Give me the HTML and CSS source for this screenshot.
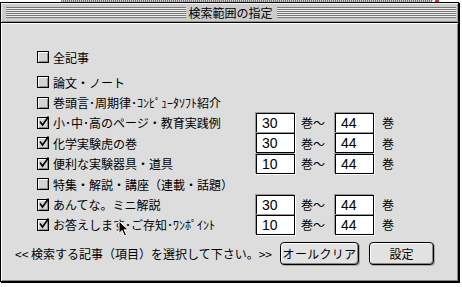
FILE: index.html
```html
<!DOCTYPE html>
<html lang="ja">
<head>
    <meta charset="UTF-8">
    <title>検索範囲の指定</title>
    <link rel="stylesheet" href="styles.css">
</head>
<body>
    <div class="desk"><span class="desk-bar"></span><span class="desk-mark"></span></div>

    <div class="window">
        <div class="titlebar">
            <span class="stripes"></span>
            <span class="title">検索範囲の指定</span>
            <span class="stripes"></span>
        </div>

        <div class="content">
            <div class="row first">
                <span class="cb"></span><span class="label">全記事</span>
            </div>
            <div class="row">
                <span class="cb"></span><span class="label">論文・ノート</span>
            </div>
            <div class="row">
                <span class="cb"></span><span class="label">巻頭言･周期律･ｺﾝﾋﾟｭｰﾀｿﾌﾄ紹介</span>
            </div>
            <div class="row">
                <span class="cb on"><svg viewBox="0 0 12 12"><path d="M2 5.5 L4.5 9 L10.5 0.5"/></svg></span>
                <span class="label">小･中･高のページ・教育実践例</span>
                <span class="field">30</span><span class="unit">巻〜</span><span class="field">44</span><span class="unit end">巻</span>
            </div>
            <div class="row">
                <span class="cb on"><svg viewBox="0 0 12 12"><path d="M2 5.5 L4.5 9 L10.5 0.5"/></svg></span>
                <span class="label">化学実験虎の巻</span>
                <span class="field">30</span><span class="unit">巻〜</span><span class="field">44</span><span class="unit end">巻</span>
            </div>
            <div class="row">
                <span class="cb on"><svg viewBox="0 0 12 12"><path d="M2 5.5 L4.5 9 L10.5 0.5"/></svg></span>
                <span class="label">便利な実験器具・道具</span>
                <span class="field">10</span><span class="unit">巻〜</span><span class="field">44</span><span class="unit end">巻</span>
            </div>
            <div class="row">
                <span class="cb"></span><span class="label">特集・解説・講座（連載・話題）</span>
            </div>
            <div class="row">
                <span class="cb on"><svg viewBox="0 0 12 12"><path d="M2 5.5 L4.5 9 L10.5 0.5"/></svg></span>
                <span class="label">あんてな。ミニ解説</span>
                <span class="field">30</span><span class="unit">巻〜</span><span class="field">44</span><span class="unit end">巻</span>
            </div>
            <div class="row">
                <span class="cb on"><svg viewBox="0 0 12 12"><path d="M2 5.5 L4.5 9 L10.5 0.5"/></svg></span>
                <span class="label">お答えします･ご存知･ﾜﾝﾎﾟｲﾝﾄ</span>
                <span class="field">10</span><span class="unit">巻〜</span><span class="field">44</span><span class="unit end">巻</span>
            </div>

            <div class="footer">
                <span class="hint">&lt;&lt; 検索する記事（項目）を選択して下さい。&gt;&gt;</span>
                <button class="btn clear">オールクリア</button>
                <button class="btn ok">設定</button>
            </div>
        </div>
    </div>

    <!-- mouse pointer over the last row -->
    <svg class="cursor" viewBox="0 0 12 17"><path d="M1 1 L1 13.5 L4 10.5 L6.5 16 L8.5 15 L6.2 9.8 L10.2 9.8 Z"/></svg>
</body>
</html>
```

FILE: styles.css
```css
body {
    margin: 0;
    width: 462px;
    height: 287px;
    overflow: hidden;
    background: #fff;
    font-family: "Noto Sans CJK JP", sans-serif;
    font-size: 12px;
    color: #000;
    position: relative;
}

.desk {
    display: flex;
    height: 2px;
}

.desk-bar {
    margin-left: 61px;
    width: 372px;
    background: repeating-linear-gradient(90deg, #777 0 1px, #ccc 1px 2px);
}

.desk-mark {
    margin-left: 2px;
    width: 4px;
    background: #d33;
}

.window {
    box-sizing: border-box;
    width: 459px;
    height: 280px;
    border: 1px solid #000;
    box-shadow: 1px 1px 0 #000;
    background: #dddddd;
    display: flex;
    flex-direction: column;
}

.titlebar {
    display: flex;
    align-items: center;
    height: 19px;
    padding: 0 2px 0 5px;
    background: #cccccc;
    border-bottom: 1px solid #000;
    box-shadow: inset 1px 1px 0 #f4f4f4, inset -1px -1px 0 #999;
}

.stripes {
    flex: 1;
    height: 11px;
    background: repeating-linear-gradient(180deg, #777 0 1px, #eee 1px 2px);
}

.title {
    padding: 0 4px 0 3px;
    line-height: 19px;
}

.content {
    flex: 1;
    padding-top: 24px;
    box-shadow: inset 1px 1px 0 #fff, inset -1px -1px 0 #888;
}

.row {
    display: flex;
    align-items: center;
    height: 20.4px;
    padding-left: 36px;
}

.row.first {
    margin-bottom: 4.6px;
}

.cb {
    box-sizing: border-box;
    position: relative;
    width: 12px;
    height: 12px;
    margin-right: 4px;
    border: 1px solid #000;
    background: #d4d4d4;
    box-shadow: inset 1px 1px 0 #fff, inset -1px -1px 0 #8c8c8c;
}

.cb svg {
    position: absolute;
    left: 0;
    top: -2px;
    width: 12px;
    height: 12px;
}

.cb path {
    fill: none;
    stroke: #000;
    stroke-width: 1.6;
}

.label {
    width: 203px;
    white-space: nowrap;
}

.field {
    box-sizing: border-box;
    width: 39px;
    height: 20px;
    padding-left: 5px;
    border: 1px solid #000;
    background: #fff;
    box-shadow: -1px -1px 0 #999, 1px 1px 0 #fff;
    font-family: "Liberation Sans", sans-serif;
    font-size: 14px;
    line-height: 18px;
}

.unit {
    width: 34px;
    margin-left: 6px;
}

.unit.end {
    margin-left: 8px;
}

.footer {
    display: flex;
    align-items: center;
    margin-top: 6.8px;
    padding-left: 14px;
    height: 23px;
}

.hint {
    width: 265px;
    white-space: nowrap;
}

.btn {
    box-sizing: border-box;
    height: 23px;
    padding: 0;
    border: 1px solid #000;
    border-radius: 4px;
    background: #e2e2e2;
    box-shadow: inset 1px 1px 0 #fff, inset -1px -1px 0 #888, 1px 1px 0 #aaa;
    font-family: "Noto Sans CJK JP", sans-serif;
    font-size: 12px;
    color: #000;
}

.clear {
    width: 79px;
    letter-spacing: 0.3px;
}

.ok {
    width: 65px;
    margin-left: 10px;
}

.cursor {
    position: absolute;
    left: 118px;
    top: 220px;
    width: 12px;
    height: 17px;
}

.cursor path {
    fill: #000;
    stroke: #fff;
    stroke-width: 1;
}
```
